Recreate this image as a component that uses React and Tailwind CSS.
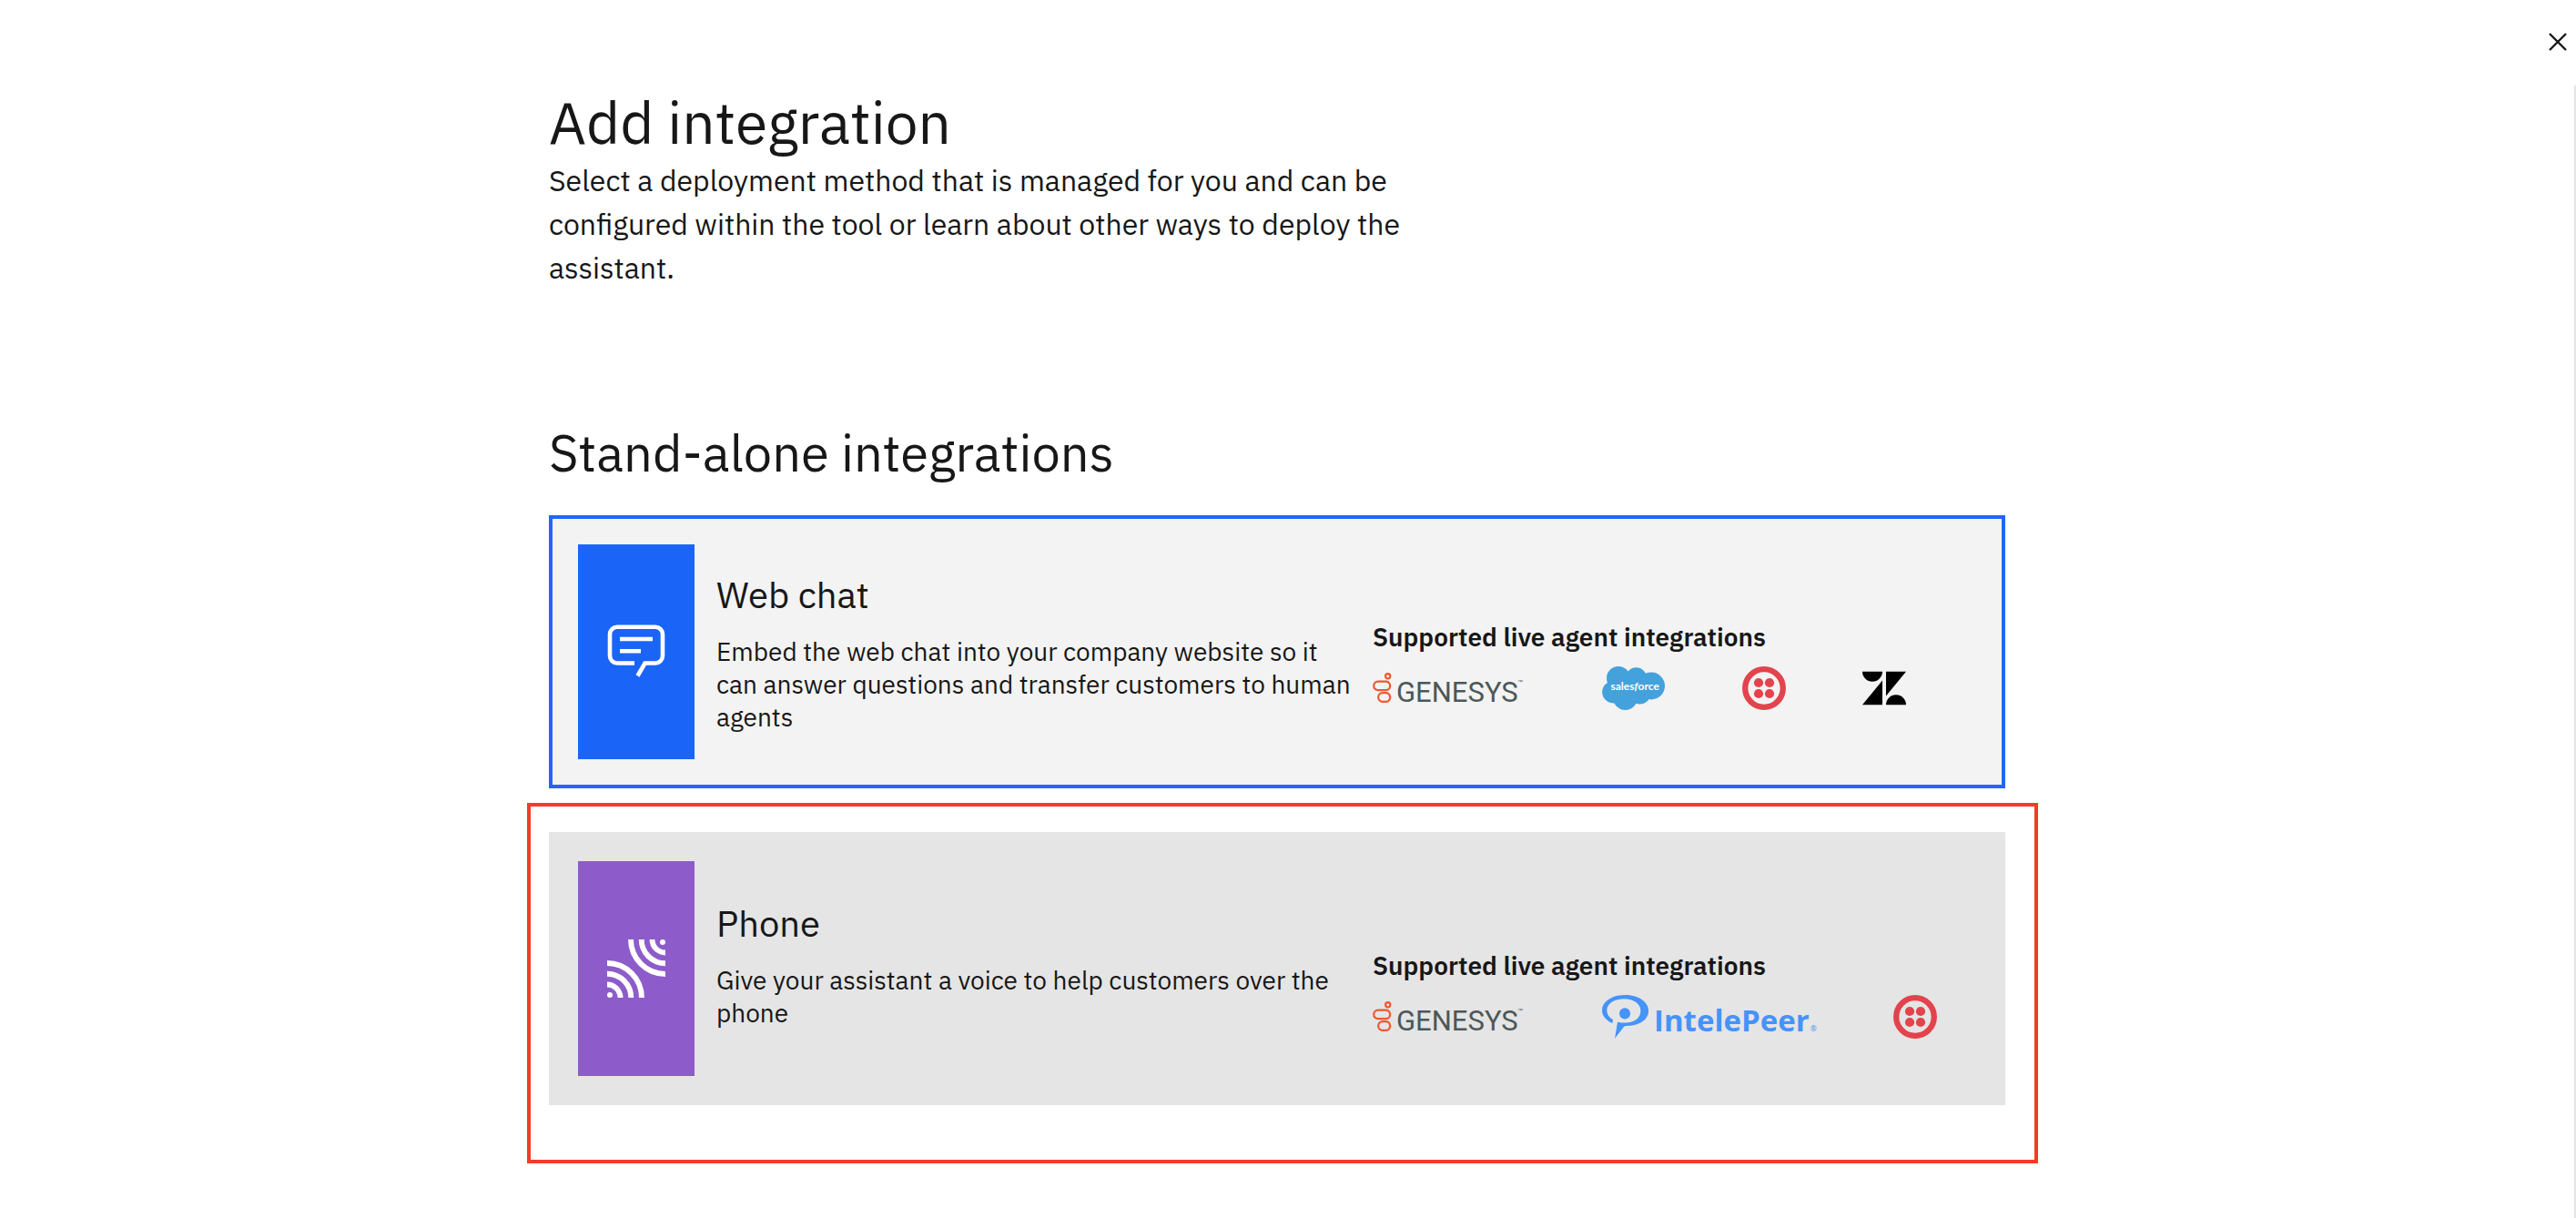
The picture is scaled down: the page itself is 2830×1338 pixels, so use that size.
function CloseIcon() {
  return (
    <svg viewBox="0 0 20 20" className="size-5" stroke="#171717" strokeWidth="2.4" aria-hidden="true">
      <path d="M1 1 19 19M19 1 1 19" />
    </svg>
  );
}

function ChatIcon() {
  return (
    <svg viewBox="0 0 64 64" className="size-16" fill="none" stroke="#fff" strokeWidth="4.6" aria-hidden="true">
      <path d="M30 44.5H11a8 8 0 0 1-8-8V12.8a8 8 0 0 1 8-8h42a8 8 0 0 1 8 8v23.7a8 8 0 0 1-8 8H41.5L33.5 58.5" />
      <path d="M14 18h36M14 31.300h23" />
    </svg>
  );
}

function SignalIcon() {
  return (
    <svg viewBox="0 0 64 64" className="size-16" fill="none" stroke="#fff" strokeWidth="5.900" aria-hidden="true">
      <path d="M0 26a38 38 0 0 1 38 38M0 37.700a26.300 26.300 0 0 1 26.300 26.300M0 49.500a14.500 14.500 0 0 1 14.500 14.500" />
      <path d="M64 38a38 38 0 0 1-38-38M64 26.300a26.300 26.300 0 0 1-26.300-26.300M64 14.500a14.500 14.500 0 0 1-14.500-14.500" />
      <circle cx="3" cy="61" r="3" fill="#fff" stroke="none" />
      <circle cx="61" cy="3" r="3" fill="#fff" stroke="none" />
    </svg>
  );
}

function GenesysLogo() {
  return (
    <svg viewBox="0 0 168 48" className="h-12 w-[168px] shrink-0" role="img" aria-label="Genesys">
      <g fill="none" stroke="#f0572f" strokeWidth="2.200">
        <circle cx="16.700" cy="10.700" r="2.600" />
        <rect x="1.200" y="16.700" width="18" height="9.400" rx="4.700" />
        <rect x="6.200" y="29.200" width="13" height="9.700" rx="4.700" />
      </g>
      <text x="26" y="39" fill="#4d5857" fontSize="31" className="font-[Roboto,sans-serif]">
        GENESYS
      </text>
      <text x="159" y="19" fill="#4d5857" fontSize="6" className="font-['Liberation_Sans',sans-serif]">
        ™
      </text>
    </svg>
  );
}

function SalesforceLogo() {
  return (
    <svg viewBox="0 0 70 48" className="h-12 w-[70px] shrink-0" role="img" aria-label="Salesforce">
      <g fill="#43a1dc">
        <circle cx="18" cy="13" r="13" />
        <circle cx="37.500" cy="12.800" r="11.500" />
        <circle cx="54" cy="21.500" r="15" />
        <circle cx="12.300" cy="28.300" r="12.100" />
        <circle cx="25.500" cy="34.500" r="13.400" />
        <circle cx="41.500" cy="29" r="12.500" />
        <path d="M12 10h40v24H12z" />
      </g>
      <text x="9.500" y="26" fill="#fff" fontSize="12" className="font-[Lato,sans-serif] font-bold">
        sales
        <tspan className="italic">f</tspan>
        orce
      </text>
    </svg>
  );
}

function TwilioLogo() {
  return (
    <svg viewBox="0 0 48 48" className="size-12 shrink-0" fill="#e3434c" role="img" aria-label="Twilio">
      <circle cx="24" cy="24" r="20.800" fill="none" stroke="#e3434c" strokeWidth="6.300" />
      <circle cx="18" cy="18" r="5.100" />
      <circle cx="30" cy="18" r="5.100" />
      <circle cx="18" cy="30" r="5.100" />
      <circle cx="30" cy="30" r="5.100" />
    </svg>
  );
}

function ZendeskLogo() {
  return (
    <svg viewBox="0 0 48 48" className="size-12 shrink-0" fill="#000" role="img" aria-label="Zendesk">
      <path d="M0 5.700H22A11 11 0 0 1 0 5.700zM22 15.500V42.300H0zM26 5.700H48L26 32.500zM26 42.300A11 11 0 0 1 48 42.300z" />
    </svg>
  );
}

function IntelePeerLogo() {
  return (
    <svg viewBox="0 0 236 48" className="h-12 w-[236px] shrink-0 overflow-visible" fill="#4693fa" role="img" aria-label="IntelePeer">
      <g transform="scale(0.334)">
        <path d="M34 93C10 82 0 66 0 50 0 22 34 0 76 0c43 0 77 22 77 52 0 30-31 50-73 50l-7 1-31 40 9-54c10 2 20 3 30 2 28 0 46-17 46-39 0-22-22-39-55-39C40 13 16 30 16 50c0 14 8 24 20 31z" />
        <circle cx="75" cy="61" r="18" />
      </g>
      <text x="57" y="40" fontSize="33" className="font-['Open_Sans',sans-serif] font-bold">
        IntelePeer
      </text>
      <text x="229" y="40" fontSize="8" className="font-['Open_Sans',sans-serif] font-semibold">
        ®
      </text>
    </svg>
  );
}

function IntegrationCard({ title, description, icon, tileClass, cardClass, children }) {
  return (
    <article className={`flex items-center ${cardClass}`}>
      <div className={`flex h-[236px] w-32 shrink-0 items-center justify-center ${tileClass}`}>{icon}</div>
      <div className="ml-6 flex flex-1 items-start pt-1">
        <div className="w-[721px] shrink-0">
          <h3 className="text-[40px] leading-[46px]">{title}</h3>
          <p className="mt-[22px] pr-4 text-[28px] leading-9">{description}</p>
        </div>
        <div className="pt-[52px]">
          <h4 className="text-[28px] leading-9 font-semibold">Supported live agent integrations</h4>
          <div className="mt-3.5 flex items-center gap-[84px]">{children}</div>
        </div>
      </div>
    </article>
  );
}

export default function App() {
  return (
    <div className="flex min-h-screen flex-col bg-white font-['IBM_Plex_Sans',Roboto,sans-serif] text-[#171717]">
      <header className="flex h-[94px] shrink-0 items-center justify-end pb-0.5">
        <button type="button" aria-label="Close" className="p-2.5">
          <CloseIcon />
        </button>
      </header>
      <main className="flex-1 border-r-2 border-[#e4e4e4] pr-[22px]">
        <div className="mx-auto max-w-[1600px]">
          <h1 className="text-[64px] leading-[80px]">Add integration</h1>
          <p className="max-w-[960px] text-[32px] leading-[48px]">
            Select a deployment method that is managed for you and can be configured within the tool or learn about
            other ways to deploy the assistant.
          </p>

          <h2 className="mt-[143px] mb-[33px] text-[56px] leading-[72px]">Stand-alone integrations</h2>

          <IntegrationCard
            title="Web chat"
            description="Embed the web chat into your company website so it can answer questions and transfer customers to human agents"
            icon={<ChatIcon />}
            tileClass="bg-[#1b64f8]"
            cardClass="border-4 border-[#2266f7] bg-[#f3f3f3] p-7"
          >
            <GenesysLogo />
            <SalesforceLogo />
            <TwilioLogo />
            <ZendeskLogo />
          </IntegrationCard>

          <div className="mt-4 -mr-9 -ml-6 border-4 border-[#f03e26] pt-7 pr-8 pb-[60px] pl-5">
            <IntegrationCard
              title="Phone"
              description="Give your assistant a voice to help customers over the phone"
              icon={<SignalIcon />}
              tileClass="bg-[#8d5cca]"
              cardClass="bg-[#e5e5e5] p-8"
            >
              <GenesysLogo />
              <IntelePeerLogo />
              <TwilioLogo />
            </IntegrationCard>
          </div>
        </div>
      </main>
    </div>
  );
}
